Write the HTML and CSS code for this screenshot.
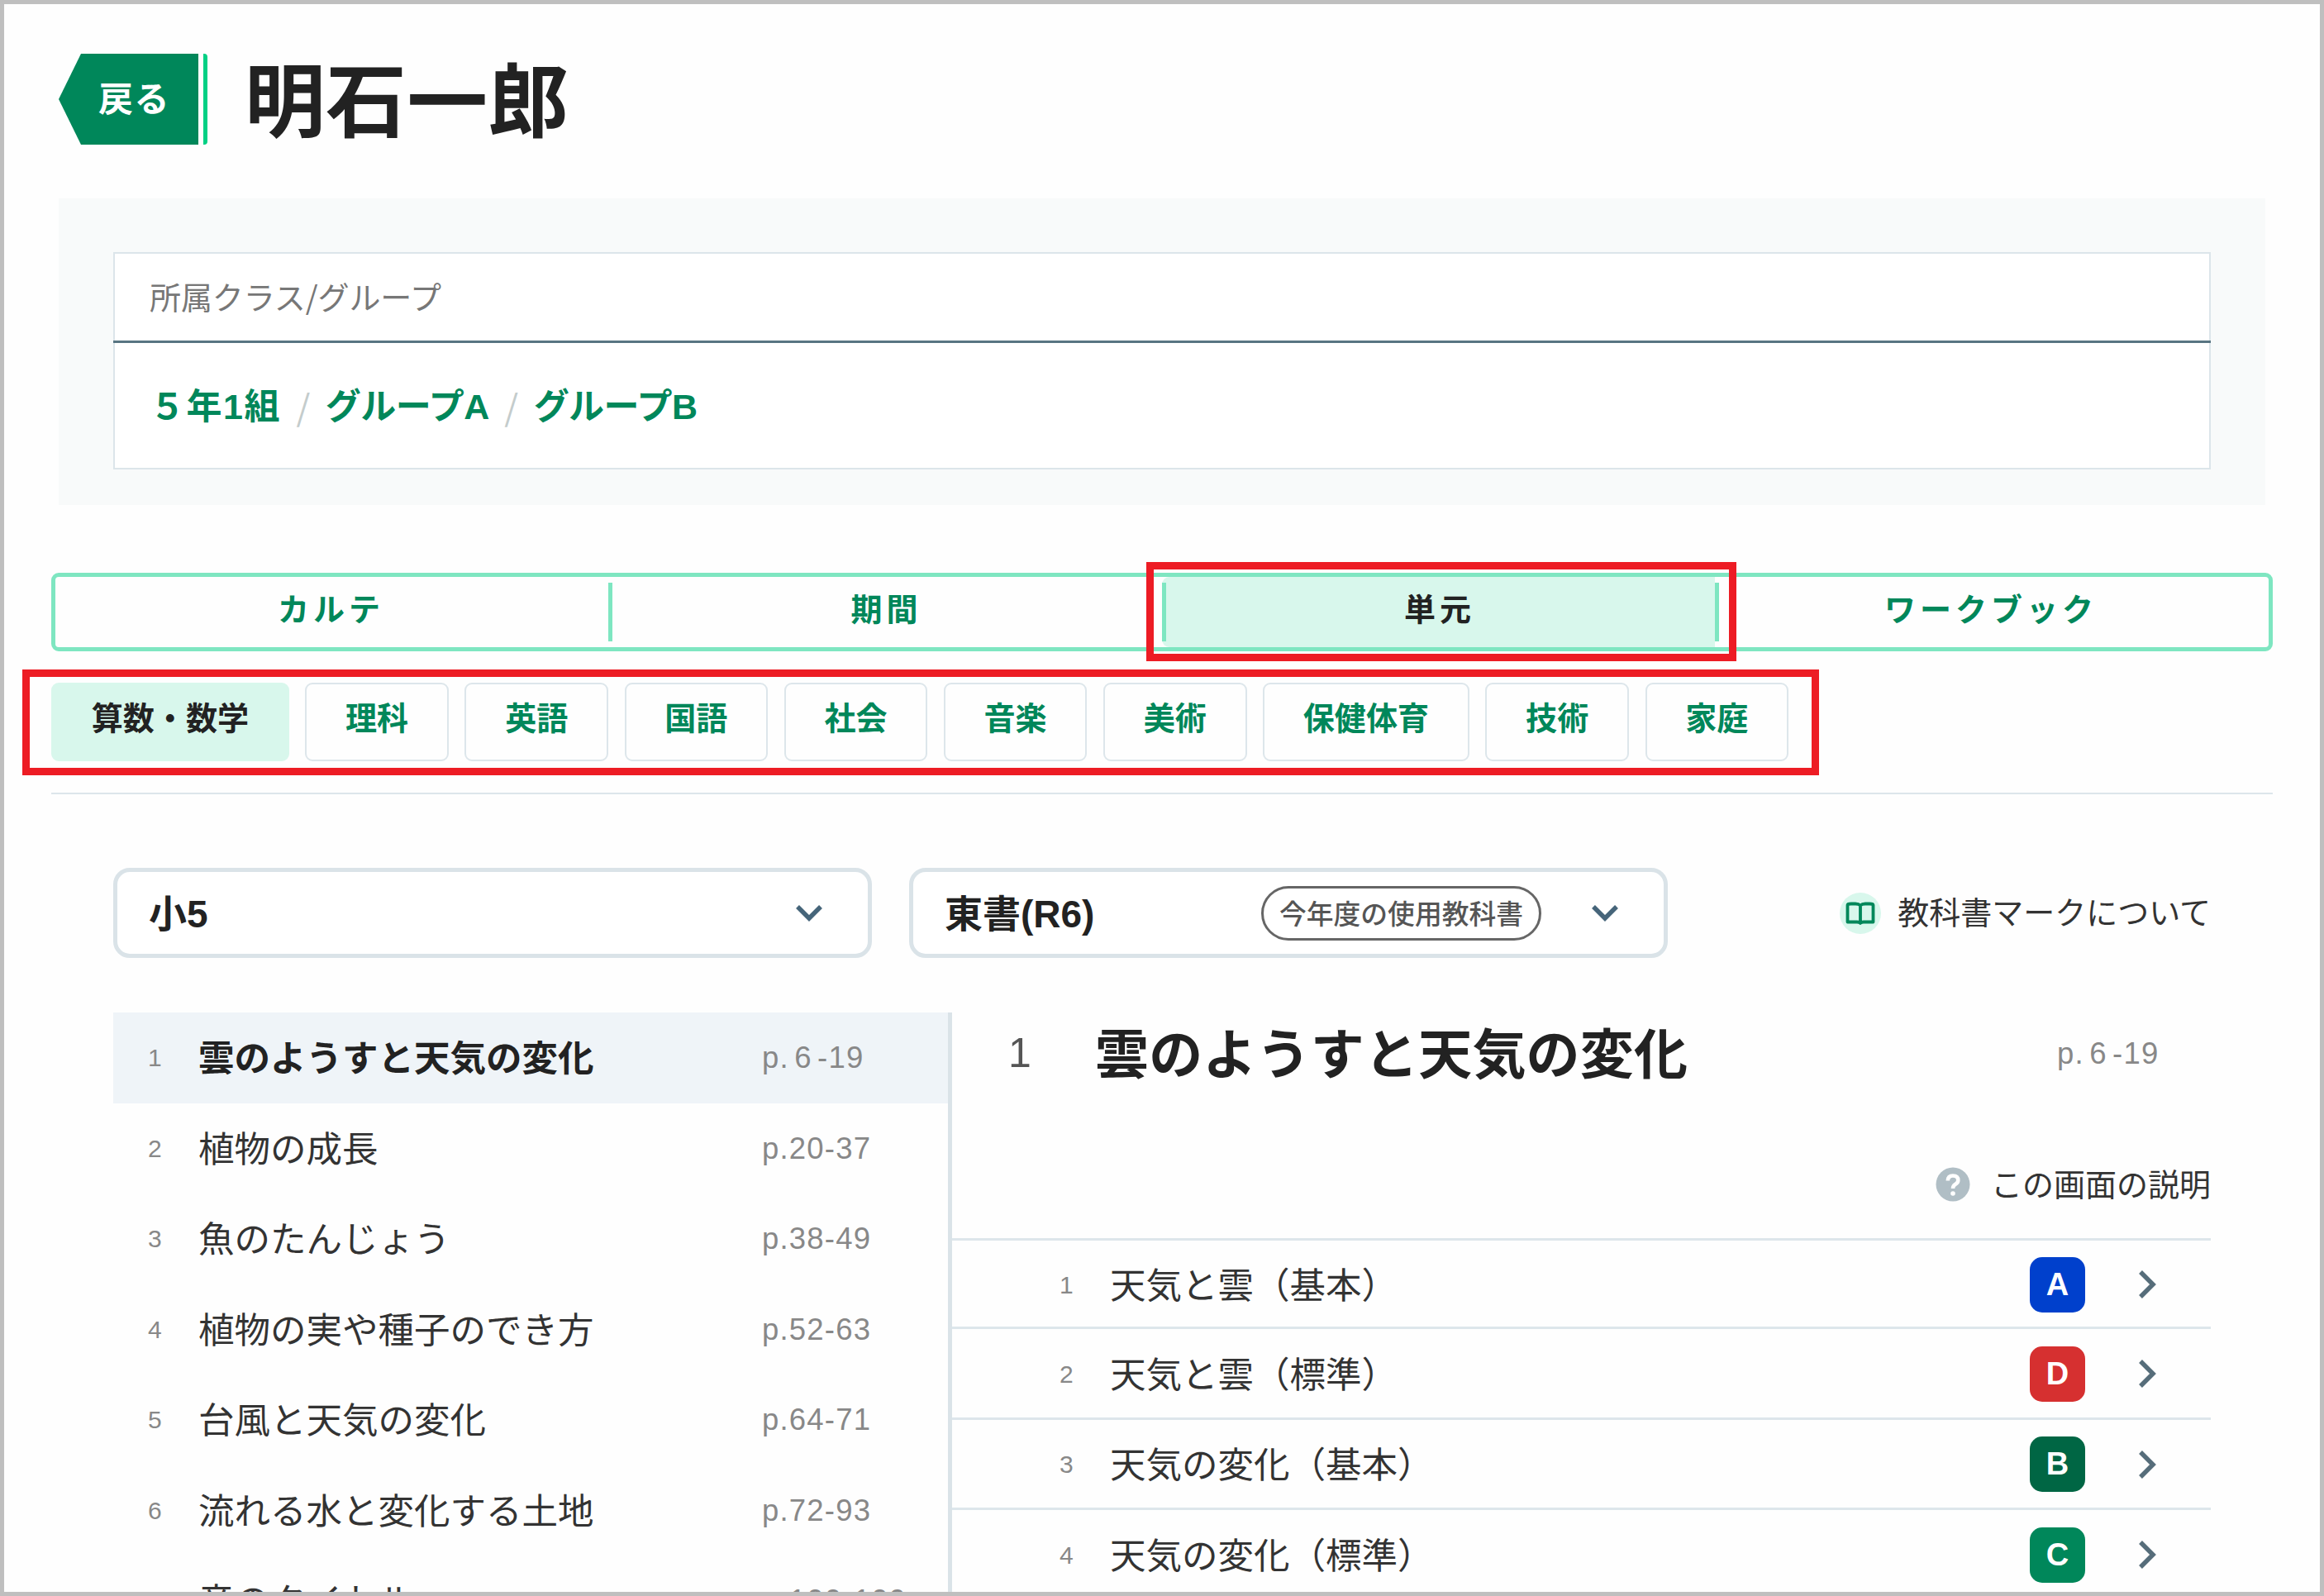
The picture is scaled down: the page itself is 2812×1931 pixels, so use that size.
FILE: index.html
```html
<!DOCTYPE html>
<html lang="ja">
<head>
<meta charset="utf-8">
<title>明石一郎</title>
<link rel="stylesheet" href="styles.css">
</head>
<body>
<div class="frame">
  <header class="head">
    <a class="back"><span class="back-label">戻る</span></a>
    <span class="back-bar"></span>
    <h1 class="name">明石一郎</h1>
  </header>

  <section class="panel">
    <div class="group-box">
      <div class="group-label">所属クラス/グループ</div>
      <div class="group-links"><a class="class-link">５年1組</a><i>/</i><a class="kana">グループA</a><i>/</i><a class="kana">グループB</a></div>
    </div>
  </section>

  <nav class="tabs">
    <a class="tab"><span>カルテ</span></a>
    <a class="tab"><span>期間</span></a>
    <a class="tab active"><span>単元</span></a>
    <a class="tab"><span>ワークブック</span></a>
    <div class="mark mark-tab"></div>
  </nav>

  <nav class="subjects">
    <a class="subject active">算数・数学</a>
    <a class="subject">理科</a>
    <a class="subject">英語</a>
    <a class="subject">国語</a>
    <a class="subject">社会</a>
    <a class="subject">音楽</a>
    <a class="subject">美術</a>
    <a class="subject">保健体育</a>
    <a class="subject">技術</a>
    <a class="subject">家庭</a>
    <div class="mark mark-subjects"></div>
  </nav>

  <div class="filters">
    <div class="select"><span class="select-text">小5</span>
      <svg class="chev-down" viewBox="0 0 34 24"><path d="M3 4 L17 18 L31 4"/></svg></div>
    <div class="select"><span class="select-text">東書(R6)</span><span class="pill">今年度の使用教科書</span>
      <svg class="chev-down" viewBox="0 0 34 24"><path d="M3 4 L17 18 L31 4"/></svg></div>
    <a class="about">
      <svg class="book" viewBox="0 0 50 50"><circle cx="25" cy="25" r="25" fill="#d8f7ec"/><path d="M25 15.500 Q23 13.500 19 13.500 H14 Q9.500 13.500 9.500 15 V35.500 H21 Q24 35.500 25 37 Q26 35.500 29 35.500 H40.500 V15 Q40.500 13.500 36 13.500 H31 Q27 13.500 25 15.500 Z M25 15.500 V37.500" fill="none" stroke="#00875a" stroke-width="3.8" stroke-linejoin="round"/></svg>
      <span>教科書マークについて</span></a>
  </div>

  <main class="content">
    <ol class="units">
      <li class="unit active"><span class="no">1</span><span class="unit-title">雲のようすと天気の変化</span><span class="page short">p. 6 -19</span></li>
      <li class="unit"><span class="no">2</span><span class="unit-title">植物の成長</span><span class="page">p.20-37</span></li>
      <li class="unit"><span class="no">3</span><span class="unit-title">魚のたんじょう</span><span class="page">p.38-49</span></li>
      <li class="unit"><span class="no">4</span><span class="unit-title">植物の実や種子のでき方</span><span class="page">p.52-63</span></li>
      <li class="unit"><span class="no">5</span><span class="unit-title">台風と天気の変化</span><span class="page">p.64-71</span></li>
      <li class="unit"><span class="no">6</span><span class="unit-title">流れる水と変化する土地</span><span class="page">p.72-93</span></li>
      <li class="unit"><span class="no"></span><span class="unit-title">音のタイトル</span><span class="page">p.100-109</span></li>
    </ol>
    <section class="detail">
      <div class="detail-head"><span class="detail-no">1</span><h2 class="detail-title">雲のようすと天気の変化</h2><span class="page short">p. 6 -19</span></div>
      <a class="help">
        <svg class="help-icon" viewBox="0 0 42 42"><circle cx="21" cy="21" r="20.500" fill="#b0bec5"/><path d="M14.800 16.500 Q15 10.500 21 10.500 Q27.300 10.500 27.300 16 Q27.300 19 23.800 21 Q21 22.600 21 26" fill="none" stroke="#fff" stroke-width="4.600"/><circle cx="21" cy="32" r="2.800" fill="#fff"/></svg>
        <span>この画面の説明</span></a>
      <ul class="lessons">
        <li class="lesson"><span class="no">1</span><span class="lesson-title">天気と雲（基本）</span><b class="grade a">A</b><svg class="chev" viewBox="0 0 22 36"><path d="M3 3 L18 18 L3 33"/></svg></li>
        <li class="lesson"><span class="no">2</span><span class="lesson-title">天気と雲（標準）</span><b class="grade d">D</b><svg class="chev" viewBox="0 0 22 36"><path d="M3 3 L18 18 L3 33"/></svg></li>
        <li class="lesson"><span class="no">3</span><span class="lesson-title">天気の変化（基本）</span><b class="grade b">B</b><svg class="chev" viewBox="0 0 22 36"><path d="M3 3 L18 18 L3 33"/></svg></li>
        <li class="lesson"><span class="no">4</span><span class="lesson-title">天気の変化（標準）</span><b class="grade c">C</b><svg class="chev" viewBox="0 0 22 36"><path d="M3 3 L18 18 L3 33"/></svg></li>
      </ul>
    </section>
  </main>
</div>
</body>
</html>
```

FILE: styles.css
```css
* { box-sizing: border-box; }
body {
  margin: 0;
  font-family: "Noto Sans CJK JP", sans-serif;
  color: #222;
  background: #fff;
}
h1, h2, ol, ul { margin: 0; padding: 0; list-style: none; }
svg { display: block; flex: none; }

.frame {
  height: 1931px;
  border: 5px solid #bfbfbf;
  overflow: hidden;
  background: #fefefe;
}

/* Latin letters and digits in a grotesque, kana and kanji in Noto */
.group-links, .select-text, .no, .page, .detail-no, .grade {
  font-family: "Liberation Sans", "Noto Sans CJK JP", sans-serif;
}

/* Header */
.head { display: flex; align-items: center; height: 110px; margin: 60px 0 0 66px; }
.back {
  width: 169px; height: 110px;
  background: #00875a;
  clip-path: polygon(27px 0, 100% 0, 100% 100%, 27px 100%, 0 50%);
  display: flex; align-items: center;
  padding: 0 0 6px 48px;
  color: #fff; font-size: 42px; font-weight: 700; line-height: 60px;
}
.back-label { white-space: nowrap; letter-spacing: 1.500px; }
.back-bar { width: 5px; height: 110px; margin-left: 6px; background: #00d084; border-radius: 0 4px 4px 0; }
.name { margin: 0 0 8px 45px; font-size: 97.500px; line-height: 110px; font-weight: 700; letter-spacing: 0.700px; }

/* Class and group panel */
.panel { margin: 65px 66px 0; padding: 65px 66px 43px; height: 371px; background: #f8fafa; }
.group-box { height: 263px; border: 2px solid #dce5ea; background: #fff; }
.group-label {
  height: 108px; margin: 0 -2px; padding-left: 44px;
  border-bottom: 3px solid #587582;
  font-size: 38px; line-height: 102px; color: #777; letter-spacing: -0.100px;
}
.group-links { display: flex; padding-left: 42px; line-height: 155px; font-size: 43px; font-weight: 700; color: #00875a; }
.group-links i { font-family: "Noto Sans CJK JP", sans-serif; font-style: normal; font-weight: 400; line-height: 150px; color: #c4cccc; margin: 0 18.500px; }
.class-link { letter-spacing: 1.500px; }
.kana { letter-spacing: -0.500px; }

/* Tabs */
.tabs {
  position: relative; display: grid; grid-template-columns: 674px 670px 669px 1fr;
  margin: 82px 57px 0; height: 95px;
  border: 5px solid #7ee6c1; border-radius: 9px;
}
.tab {
  display: flex; align-items: center;
  background: linear-gradient(#7ee6c1, #7ee6c1) right center / 5px 71px no-repeat;
  color: #00875a; font-size: 38px; font-weight: 700; letter-spacing: 5px;
}
.tab:nth-child(4) { background: none; }
.tab span { flex: 1; text-align: center; line-height: 60px; padding: 0 7px 11px 0; }
.tab.active {
  color: #222;
  margin-left: -5px; padding-left: 5px;
  background:
    linear-gradient(#7ee6c1, #7ee6c1) left center / 5px 71px no-repeat,
    linear-gradient(#7ee6c1, #7ee6c1) right center / 5px 71px no-repeat,
    linear-gradient(90deg, #d8f7ec calc(100% - 5px), transparent 0);
  border-radius: 9px 0 0 9px;
}
.mark { position: absolute; border: 9px solid #ed1c24; pointer-events: none; }
.mark-tab { left: 1320px; top: -18px; width: 714px; height: 120px; }

/* Subjects */
.subjects {
  position: relative; display: flex; gap: 19.600px;
  margin: 38px 57px 0; height: 135px;
  border-bottom: 2px solid #dde6eb;
}
.subject {
  height: 95px; padding: 0 46.700px;
  border: 2px solid #dde6eb; border-radius: 9px;
  font-size: 38.100px; line-height: 78px; font-weight: 700; color: #00875a; white-space: nowrap;
}
.subject.active { background: #d8f7ec; border-color: #d8f7ec; color: #222; }
.mark-subjects { left: -35px; top: -16px; width: 2174px; height: 128px; }

/* Filters */
.filters { display: flex; align-items: center; margin: 89px 132px 0; height: 109px; }
.select {
  display: flex; align-items: center;
  width: 918px; height: 109px; margin-right: 45px; padding: 0 54px 0 38px;
  border: 5px solid #dae3e8; border-radius: 20px; background: #fff;
}
.select-text { flex: 1; font-size: 46px; line-height: 60px; padding-top: 2px; font-weight: 700; }
.pill {
  height: 66px; width: 339px; margin-right: 60px;
  border: 3px solid #666; border-radius: 33px;
  font-size: 32.800px; line-height: 58px; text-align: center; color: #555; font-weight: 500; white-space: nowrap;
}
.chev-down { width: 34px; height: 24px; }
.chev-down path { fill: none; stroke: #46657a; stroke-width: 5.500; }
.about { display: flex; align-items: center; margin-left: auto; font-size: 38px; line-height: 56px; color: #333; white-space: nowrap; }
.about span { margin-left: 20px; padding-bottom: 5px; }
.book { width: 50px; height: 50px; }

/* Content */
.content { display: flex; margin: 66px 132px 0; height: 701px; }
.units { width: 1015px; border-right: 5px solid #dae3e8; }
.unit { display: flex; align-items: center; height: 109.500px; }
.unit.active { background: #eff4f8; }
.no { padding: 1px 0 0 42px; font-size: 30px; color: #888; }
.unit .no { width: 103px; }
.unit-title { width: 682px; font-size: 43.500px; line-height: 70px; padding-bottom: 3px; color: #333; white-space: nowrap; }
.unit.active .unit-title { font-weight: 700; color: #222; }
.page { padding-top: 1px; font-size: 36.500px; color: #888; white-space: nowrap; letter-spacing: 1.200px; }
.page.short { word-spacing: -5px; }

.detail { flex: 1; }
.detail-head { display: flex; align-items: center; height: 98px; padding-left: 68px; }
.detail-no { width: 105px; font-size: 50px; color: #555; }
.detail-title { width: 1164px; font-size: 65px; line-height: 90px; padding-bottom: 7px; letter-spacing: 0.200px; white-space: nowrap; }
.help { display: flex; align-items: center; justify-content: flex-end; height: 60px; margin-top: 80px; font-size: 38px; color: #333; }
.help span { margin-left: 25px; line-height: 56px; padding-bottom: 5px; }
.help-icon { width: 42px; height: 42px; }
.lessons { margin-top: 35px; }
.lesson { display: flex; align-items: center; height: 109.500px; border-top: 3px solid #dde6eb; padding: 2px 0 0 88px; }
.lesson:first-child { height: 107px; }
.lesson .no { width: 103px; }
.lesson-title { width: 1113px; font-size: 43.500px; line-height: 70px; padding-bottom: 3px; color: #333; white-space: nowrap; }
.grade {
  width: 67px; height: 67px; border-radius: 15px;
  color: #fff; font-size: 38px; line-height: 67px; text-align: center;
}
.grade.a { background: #0040cc; }
.grade.d { background: #d63030; }
.grade.b { background: #006644; }
.grade.c { background: #00875a; }
.chev { width: 22px; height: 36px; margin-left: 64px; }
.chev path { fill: none; stroke: #566d7a; stroke-width: 5.500; }
```
